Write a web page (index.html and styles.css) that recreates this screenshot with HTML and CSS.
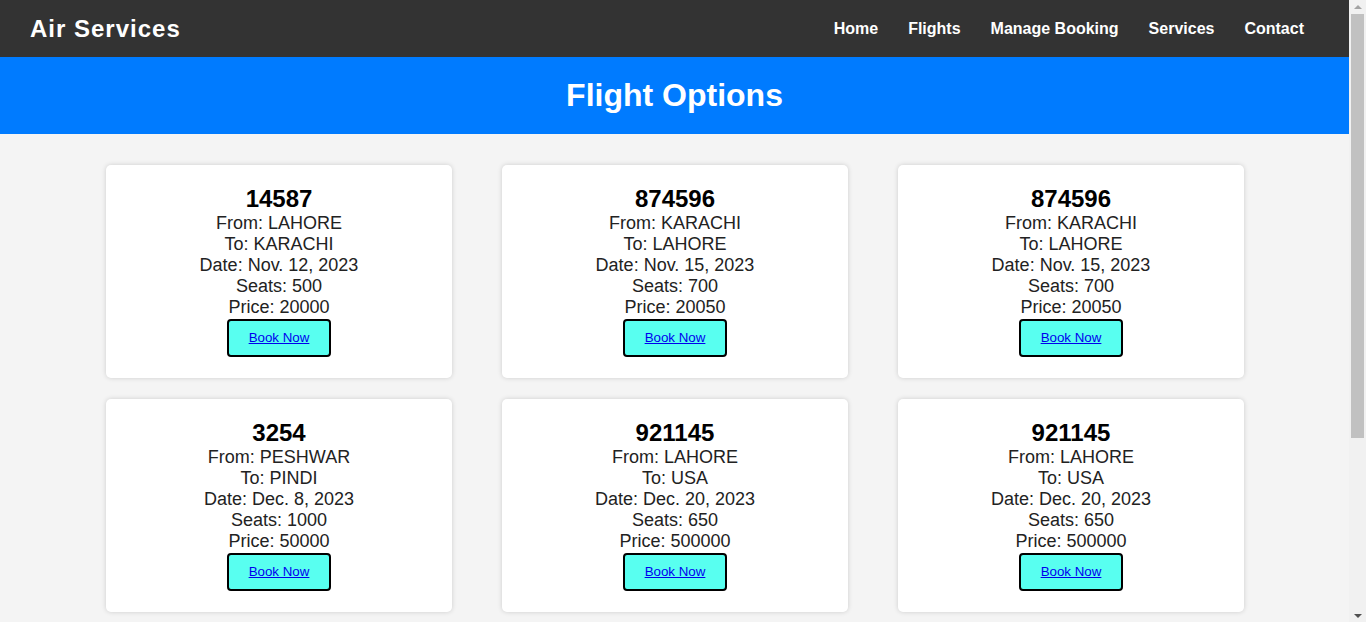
FILE: index.html
```html
<!DOCTYPE html>
<html lang="en">
<head>
<meta charset="utf-8">
<title>Air Services</title>
<link rel="stylesheet" href="styles.css">
</head>
<body>
<div class="window">
  <div class="page">
    <header class="topbar">
      <div class="brand">Air Services</div>
      <nav class="nav">
        <a href="#">Home</a>
        <a href="#">Flights</a>
        <a href="#">Manage Booking</a>
        <a href="#">Services</a>
        <a href="#">Contact</a>
      </nav>
    </header>
    <section class="banner"><h1>Flight Options</h1></section>
    <main class="grid">
      <div class="card">
        <h2>14587</h2>
        <p>From: LAHORE</p><p>To: KARACHI</p><p>Date: Nov. 12, 2023</p><p>Seats: 500</p><p>Price: 20000</p>
        <div class="btn"><a href="#">Book Now</a></div>
      </div>
      <div class="card">
        <h2>874596</h2>
        <p>From: KARACHI</p><p>To: LAHORE</p><p>Date: Nov. 15, 2023</p><p>Seats: 700</p><p>Price: 20050</p>
        <div class="btn"><a href="#">Book Now</a></div>
      </div>
      <div class="card">
        <h2>874596</h2>
        <p>From: KARACHI</p><p>To: LAHORE</p><p>Date: Nov. 15, 2023</p><p>Seats: 700</p><p>Price: 20050</p>
        <div class="btn"><a href="#">Book Now</a></div>
      </div>
      <div class="card">
        <h2>3254</h2>
        <p>From: PESHWAR</p><p>To: PINDI</p><p>Date: Dec. 8, 2023</p><p>Seats: 1000</p><p>Price: 50000</p>
        <div class="btn"><a href="#">Book Now</a></div>
      </div>
      <div class="card">
        <h2>921145</h2>
        <p>From: LAHORE</p><p>To: USA</p><p>Date: Dec. 20, 2023</p><p>Seats: 650</p><p>Price: 500000</p>
        <div class="btn"><a href="#">Book Now</a></div>
      </div>
      <div class="card">
        <h2>921145</h2>
        <p>From: LAHORE</p><p>To: USA</p><p>Date: Dec. 20, 2023</p><p>Seats: 650</p><p>Price: 500000</p>
        <div class="btn"><a href="#">Book Now</a></div>
      </div>
    </main>
  </div>
  <div class="scrollbar">
    <div class="arrow up"></div>
    <div class="track"><div class="thumb"></div></div>
    <div class="arrow down"></div>
  </div>
</div>
</body>
</html>
```
FILE: styles.css
```css
html, body {
  margin: 0;
  padding: 0;
}
body {
  background: #f4f4f4;
  font-family: "Liberation Sans", Arial, sans-serif;
  color: #222;
  overflow: hidden;
}
.window {
  display: flex;
  height: 622px;
  overflow: hidden;
}
.page {
  flex: 1;
  min-width: 0;
}
.topbar {
  background: #333333;
  height: 57px;
  padding: 0 30px;
  display: flex;
  align-items: center;
  justify-content: space-between;
  box-sizing: border-box;
}
.brand {
  color: #fff;
  font-size: 24px;
  font-weight: bold;
  letter-spacing: 1px;
}
.nav {
  display: flex;
}
.nav a {
  color: #fff;
  text-decoration: none;
  font-weight: bold;
  font-size: 16px;
  padding: 0 15px;
}
.banner {
  background: #007bff;
  padding: 20px 0;
  text-align: center;
}
.banner h1 {
  margin: 0;
  color: #fff;
  font-size: 32px;
  line-height: 37px;
}
.grid {
  display: grid;
  grid-template-columns: repeat(3, 346px);
  justify-content: center;
  column-gap: 50px;
  row-gap: 21px;
  padding: 31px 0 10px 1px;
}
.card {
  background: #fff;
  border-radius: 5px;
  box-shadow: 0 0 5px rgba(0, 0, 0, 0.16);
  padding: 20px 10px 21px;
  height: 213px;
  box-sizing: border-box;
  display: flex;
  flex-direction: column;
  align-items: center;
  text-align: center;
}
.card h2 {
  margin: 0;
  font-size: 24px;
  line-height: 28px;
  color: #000;
}
.card p {
  margin: 0;
  font-size: 18px;
  line-height: 21px;
}
.btn {
  margin-top: 1px;
  background: #58fff0;
  border: 2px solid #000;
  border-radius: 4px;
  padding: 9px 20px;
  font-size: 13.333px;
  line-height: 16px;
}
.btn a {
  color: #0000ee;
  text-decoration: underline;
}
.scrollbar {
  width: 17px;
  flex: none;
  background: #f1f1f1;
  display: flex;
  flex-direction: column;
  align-items: center;
}
.arrow {
  height: 13px;
  width: 17px;
  flex: none;
  display: flex;
  align-items: center;
  justify-content: center;
}
.arrow::before {
  content: "";
  width: 0;
  height: 0;
  border-left: 4px solid transparent;
  border-right: 4px solid transparent;
}
.arrow.up::before {
  border-bottom: 4px solid #a3a3a3;
}
.arrow.down::before {
  border-top: 4px solid #505050;
}
.track {
  flex: 1;
  width: 17px;
  display: flex;
  justify-content: center;
}
.thumb {
  width: 13px;
  height: 424px;
  margin-top: 1px;
  background: #c1c1c1;
}
```
